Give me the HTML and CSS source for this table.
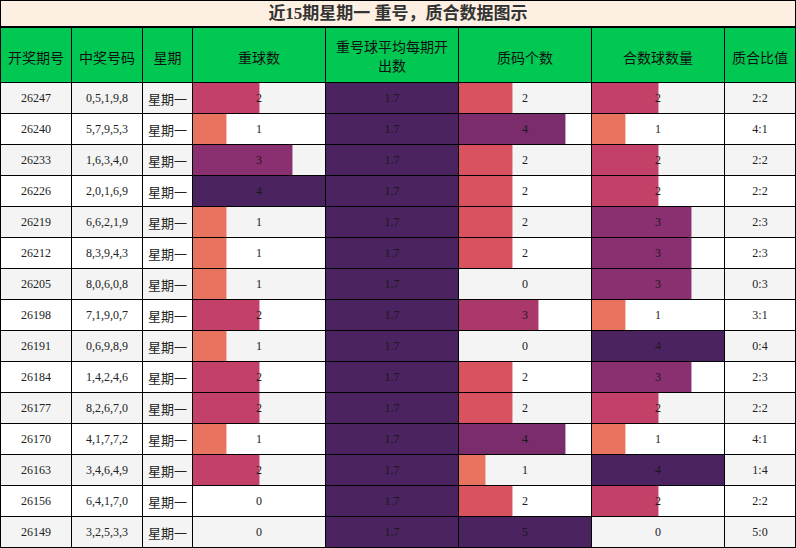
FILE: index.html
```html
<!DOCTYPE html>
<html lang="zh">
<head>
<meta charset="utf-8">
<title>近15期星期一 重号，质合数据图示</title>
<link rel="stylesheet" href="styles.css">
</head>
<body>
<div class="page">
  <div class="title">近15期星期一 重号，质合数据图示</div>
  <div class="grid">
    <div class="th">开奖期号</div>
    <div class="th">中奖号码</div>
    <div class="th">星期</div>
    <div class="th">重球数</div>
    <div class="th th-wrap"><span>重号球平均每期开出数</span></div>
    <div class="th">质码个数</div>
    <div class="th">合数球数量</div>
    <div class="th">质合比值</div>

    <!-- 1 -->
    <div class="td odd">26247</div><div class="td odd">0,5,1,9,8</div><div class="td odd cjk">星期一</div>
    <div class="td odd"><i class="bar k2" style="width:50%"></i><span>2</span></div>
    <div class="td odd"><i class="bar dk" style="width:100%"></i><span>1.7</span></div>
    <div class="td odd"><i class="bar p2" style="width:40%"></i><span>2</span></div>
    <div class="td odd"><i class="bar k2" style="width:50%"></i><span>2</span></div>
    <div class="td odd">2:2</div>
    <!-- 2 -->
    <div class="td">26240</div><div class="td">5,7,9,5,3</div><div class="td cjk">星期一</div>
    <div class="td"><i class="bar v1" style="width:25%"></i><span>1</span></div>
    <div class="td"><i class="bar dk" style="width:100%"></i><span>1.7</span></div>
    <div class="td"><i class="bar p4" style="width:80%"></i><span>4</span></div>
    <div class="td"><i class="bar v1" style="width:25%"></i><span>1</span></div>
    <div class="td">4:1</div>
    <!-- 3 -->
    <div class="td odd">26233</div><div class="td odd">1,6,3,4,0</div><div class="td odd cjk">星期一</div>
    <div class="td odd"><i class="bar k3" style="width:75%"></i><span>3</span></div>
    <div class="td odd"><i class="bar dk" style="width:100%"></i><span>1.7</span></div>
    <div class="td odd"><i class="bar p2" style="width:40%"></i><span>2</span></div>
    <div class="td odd"><i class="bar k2" style="width:50%"></i><span>2</span></div>
    <div class="td odd">2:2</div>
    <!-- 4 -->
    <div class="td">26226</div><div class="td">2,0,1,6,9</div><div class="td cjk">星期一</div>
    <div class="td"><i class="bar dk" style="width:100%"></i><span>4</span></div>
    <div class="td"><i class="bar dk" style="width:100%"></i><span>1.7</span></div>
    <div class="td"><i class="bar p2" style="width:40%"></i><span>2</span></div>
    <div class="td"><i class="bar k2" style="width:50%"></i><span>2</span></div>
    <div class="td">2:2</div>
    <!-- 5 -->
    <div class="td odd">26219</div><div class="td odd">6,6,2,1,9</div><div class="td odd cjk">星期一</div>
    <div class="td odd"><i class="bar v1" style="width:25%"></i><span>1</span></div>
    <div class="td odd"><i class="bar dk" style="width:100%"></i><span>1.7</span></div>
    <div class="td odd"><i class="bar p2" style="width:40%"></i><span>2</span></div>
    <div class="td odd"><i class="bar k3" style="width:75%"></i><span>3</span></div>
    <div class="td odd">2:3</div>
    <!-- 6 -->
    <div class="td">26212</div><div class="td">8,3,9,4,3</div><div class="td cjk">星期一</div>
    <div class="td"><i class="bar v1" style="width:25%"></i><span>1</span></div>
    <div class="td"><i class="bar dk" style="width:100%"></i><span>1.7</span></div>
    <div class="td"><i class="bar p2" style="width:40%"></i><span>2</span></div>
    <div class="td"><i class="bar k3" style="width:75%"></i><span>3</span></div>
    <div class="td">2:3</div>
    <!-- 7 -->
    <div class="td odd">26205</div><div class="td odd">8,0,6,0,8</div><div class="td odd cjk">星期一</div>
    <div class="td odd"><i class="bar v1" style="width:25%"></i><span>1</span></div>
    <div class="td odd"><i class="bar dk" style="width:100%"></i><span>1.7</span></div>
    <div class="td odd"><span>0</span></div>
    <div class="td odd"><i class="bar k3" style="width:75%"></i><span>3</span></div>
    <div class="td odd">0:3</div>
    <!-- 8 -->
    <div class="td">26198</div><div class="td">7,1,9,0,7</div><div class="td cjk">星期一</div>
    <div class="td"><i class="bar k2" style="width:50%"></i><span>2</span></div>
    <div class="td"><i class="bar dk" style="width:100%"></i><span>1.7</span></div>
    <div class="td"><i class="bar p3" style="width:60%"></i><span>3</span></div>
    <div class="td"><i class="bar v1" style="width:25%"></i><span>1</span></div>
    <div class="td">3:1</div>
    <!-- 9 -->
    <div class="td odd">26191</div><div class="td odd">0,6,9,8,9</div><div class="td odd cjk">星期一</div>
    <div class="td odd"><i class="bar v1" style="width:25%"></i><span>1</span></div>
    <div class="td odd"><i class="bar dk" style="width:100%"></i><span>1.7</span></div>
    <div class="td odd"><span>0</span></div>
    <div class="td odd"><i class="bar dk" style="width:100%"></i><span>4</span></div>
    <div class="td odd">0:4</div>
    <!-- 10 -->
    <div class="td">26184</div><div class="td">1,4,2,4,6</div><div class="td cjk">星期一</div>
    <div class="td"><i class="bar k2" style="width:50%"></i><span>2</span></div>
    <div class="td"><i class="bar dk" style="width:100%"></i><span>1.7</span></div>
    <div class="td"><i class="bar p2" style="width:40%"></i><span>2</span></div>
    <div class="td"><i class="bar k3" style="width:75%"></i><span>3</span></div>
    <div class="td">2:3</div>
    <!-- 11 -->
    <div class="td odd">26177</div><div class="td odd">8,2,6,7,0</div><div class="td odd cjk">星期一</div>
    <div class="td odd"><i class="bar k2" style="width:50%"></i><span>2</span></div>
    <div class="td odd"><i class="bar dk" style="width:100%"></i><span>1.7</span></div>
    <div class="td odd"><i class="bar p2" style="width:40%"></i><span>2</span></div>
    <div class="td odd"><i class="bar k2" style="width:50%"></i><span>2</span></div>
    <div class="td odd">2:2</div>
    <!-- 12 -->
    <div class="td">26170</div><div class="td">4,1,7,7,2</div><div class="td cjk">星期一</div>
    <div class="td"><i class="bar v1" style="width:25%"></i><span>1</span></div>
    <div class="td"><i class="bar dk" style="width:100%"></i><span>1.7</span></div>
    <div class="td"><i class="bar p4" style="width:80%"></i><span>4</span></div>
    <div class="td"><i class="bar v1" style="width:25%"></i><span>1</span></div>
    <div class="td">4:1</div>
    <!-- 13 -->
    <div class="td odd">26163</div><div class="td odd">3,4,6,4,9</div><div class="td odd cjk">星期一</div>
    <div class="td odd"><i class="bar k2" style="width:50%"></i><span>2</span></div>
    <div class="td odd"><i class="bar dk" style="width:100%"></i><span>1.7</span></div>
    <div class="td odd"><i class="bar v1" style="width:20%"></i><span>1</span></div>
    <div class="td odd"><i class="bar dk" style="width:100%"></i><span>4</span></div>
    <div class="td odd">1:4</div>
    <!-- 14 -->
    <div class="td">26156</div><div class="td">6,4,1,7,0</div><div class="td cjk">星期一</div>
    <div class="td"><span>0</span></div>
    <div class="td"><i class="bar dk" style="width:100%"></i><span>1.7</span></div>
    <div class="td"><i class="bar p2" style="width:40%"></i><span>2</span></div>
    <div class="td"><i class="bar k2" style="width:50%"></i><span>2</span></div>
    <div class="td">2:2</div>
    <!-- 15 -->
    <div class="td odd">26149</div><div class="td odd">3,2,5,3,3</div><div class="td odd cjk">星期一</div>
    <div class="td odd"><span>0</span></div>
    <div class="td odd"><i class="bar dk" style="width:100%"></i><span>1.7</span></div>
    <div class="td odd"><i class="bar dk" style="width:100%"></i><span>5</span></div>
    <div class="td odd"><span>0</span></div>
    <div class="td odd">5:0</div>
  </div>
</div>
</body>
</html>
```

FILE: styles.css
```css
html, body {
  margin: 0;
  padding: 0;
  background: #fff;
}

.page {
  width: 796px;
  font-family: "Liberation Serif", "Noto Sans CJK SC", serif;
}

.title {
  box-sizing: border-box;
  height: 27px;
  border: 1px solid #000;
  background: #fdf0e2;
  color: #333;
  font-size: 17px;
  font-weight: bold;
  line-height: 25px;
  text-align: center;
}

.grid {
  display: grid;
  grid-template-columns: 70px 70px 49px 132px 132px 132px 132px 70px;
  grid-template-rows: 54px repeat(15, 30px);
  gap: 1px;
  padding: 1px;
  background: #000;
}

.th {
  background: #00c853;
  color: #111;
  font-family: "Noto Sans CJK SC", sans-serif;
  font-size: 14px;
  display: flex;
  align-items: center;
  justify-content: center;
  text-align: center;
  padding-top: 3px;
  box-sizing: border-box;
}

.th-wrap {
  padding: 1px 10px 0;
  line-height: 19px;
}

.td {
  position: relative;
  background: #fff;
  color: #222;
  font-size: 12px;
  display: flex;
  align-items: center;
  justify-content: center;
  overflow: hidden;
}

.td.odd {
  background: #f4f4f4;
}

.td.cjk {
  font-family: "Noto Sans CJK SC", sans-serif;
  font-size: 13px;
  color: #222;
}

.td span {
  position: relative;
  color: #1a1a1a;
}

.bar {
  position: absolute;
  left: 0;
  top: 0;
  bottom: 0;
}

.bar::after {
  content: "";
  position: absolute;
  top: 0;
  bottom: 0;
  right: -1px;
  width: 1px;
  background: inherit;
  opacity: 0.45;
}

.v1 { background: #e8735f; }
.k2 { background: #c34169; }
.k3 { background: #8a2f70; }
.p2 { background: #d8525f; }
.p3 { background: #ab386a; }
.p4 { background: #7b2c6c; }
.dk { background: #4b2360; }
```
